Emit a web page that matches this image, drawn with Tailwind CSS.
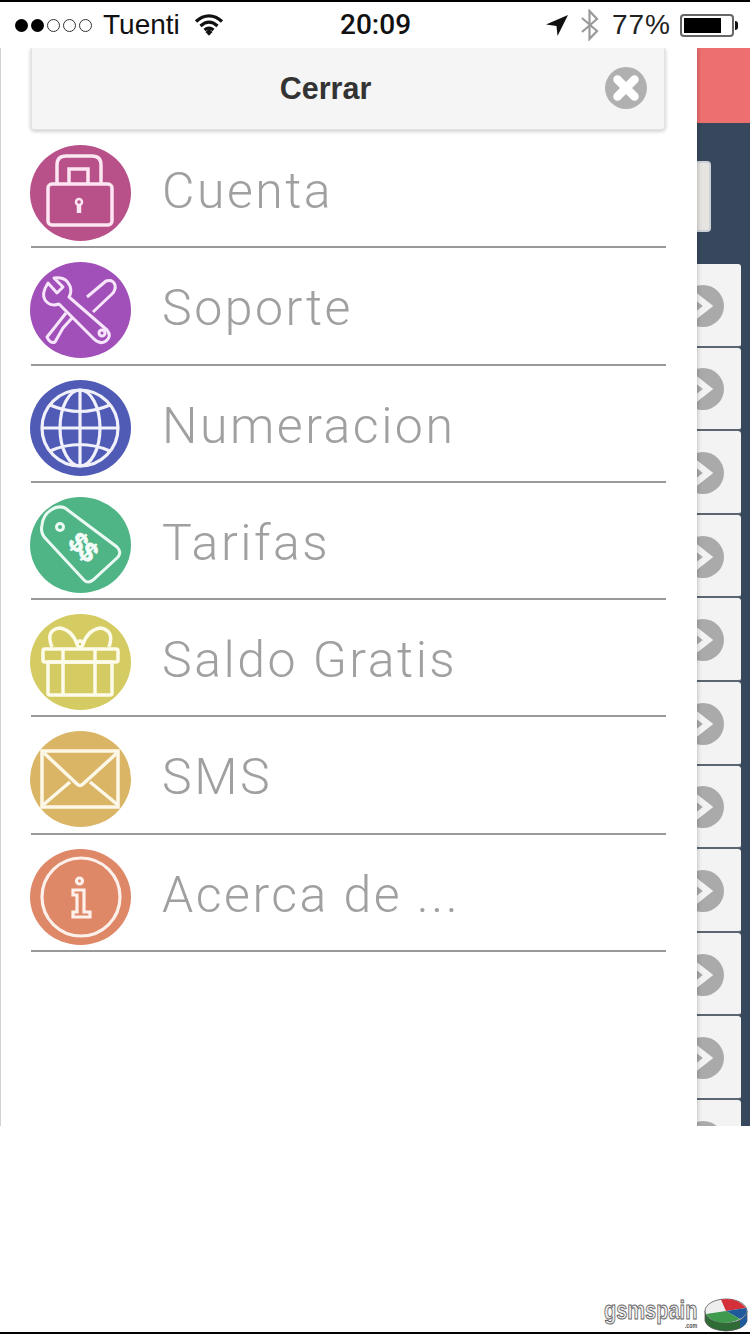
<!DOCTYPE html>
<html lang="es">
<head>
  <meta charset="UTF-8" />
  <meta name="viewport" content="width=device-width, initial-scale=1" />
  <title>Menu</title>
  <script src="https://cdn.jsdelivr.net/npm/@tailwindcss/browser@4"></script>
</head>
<body class="bg-white">
<div class="w-[750px] h-[1334px] overflow-hidden flex flex-col bg-white font-['Liberation_Sans',sans-serif]">

  <!-- status bar -->
  <header class="h-[48px] shrink-0 border-t-2 border-black flex items-center text-[28px] text-[#111] relative">
    <div class="flex items-center gap-[3px] ml-[15px] w-[83px]">
      <span class="w-[13px] h-[13px] rounded-full bg-black"></span>
      <span class="w-[13px] h-[13px] rounded-full bg-black"></span>
      <span class="w-[13px] h-[13px] rounded-full border border-[#333]"></span>
      <span class="w-[13px] h-[13px] rounded-full border border-[#333]"></span>
      <span class="w-[13px] h-[13px] rounded-full border border-[#333]"></span>
    </div>
    <span class="ml-[5px] leading-none">Tuenti</span>
    <svg class="ml-[14px]" width="30" height="24" viewBox="0 0 30 24">
      <path d="M2 8.500C10 1 20 1 28 8.500M6.500 13C12 8 18 8 23.500 13M10.500 17C13.500 14.500 16.500 14.500 19.500 17" fill="none" stroke="#111" stroke-width="3.200"/>
      <path d="M11.500 19L15 15.800 18.500 19 15 22.800Z" fill="#111"/>
    </svg>
    <span class="absolute left-[340px] top-[9px] font-['Roboto',sans-serif] font-medium leading-none">20:09</span>
    <div class="ml-auto flex items-center">
      <svg class="-ml-[2px]" width="24" height="24" viewBox="0 0 24 24"><path d="M23 2L1 11.500 11.500 13 12.500 23Z" fill="#111"/></svg>
      <svg class="ml-[10px]" width="22" height="32" viewBox="0 0 22 32"><path d="M3 9L18 22 10.500 30V2L18 10 3 23" fill="none" stroke="#9a9a9a" stroke-width="2.200"/></svg>
      <span class="ml-[11px] leading-none text-[#222] tracking-[1px]">77%</span>
      <div class="ml-[9px] w-[54px] h-[23px] rounded-[4px] border-2 border-[#666] p-[2px]">
        <div class="w-[37px] h-full bg-black"></div>
      </div>
      <span class="ml-[1px] mr-[12px] w-[3px] h-[9px] rounded-r-full bg-[#111]"></span>
    </div>
  </header>

  <main class="relative h-[1078px] shrink-0 overflow-hidden bg-[#37485c]">
    <!-- page underneath the drawer -->
    <div class="h-[75px] bg-[#ee6f70]"></div>
    <div class="mt-[38px] h-[71px] w-[711px] rounded-[4px] border-2 border-[#cdd2d8] bg-[#e5e4e1]"></div>
    <div id="rows" class="mt-[32px] w-[741px]"></div>

    <!-- drawer -->
    <aside class="absolute top-0 left-0 bottom-0 w-[697px] bg-white border-l border-[#cfd2d6] shadow-[1px_0_4px_rgba(0,0,0,0.2)]">
      <div class="ml-[30px] w-[634px] h-[82px] flex items-center bg-[#f5f5f5] rounded-b-[3px] border-x border-b border-[#e3e3e3] shadow-[0_1px_4px_rgba(0,0,0,0.25)] relative">
        <span class="w-full text-center pr-[45px] text-[30.5px] font-bold text-[#333]">Cerrar</span>
        <svg class="absolute right-[17px] top-[19px]" width="42" height="42" viewBox="0 0 42 42">
          <circle cx="21" cy="21" r="21" fill="#b0b0b0"/>
          <path d="M12.500 12.500L29.500 29.500M29.500 12.500L12.500 29.500" stroke="#fff" stroke-width="8.500" stroke-linecap="round"/>
        </svg>
      </div>

      <ul class="ml-[30px] pt-[1px] w-[635px] font-['Roboto',sans-serif] font-light text-[50px] tracking-[2.5px] text-[#a0a0a0]">
        <li class="h-[117.3px] flex items-start pt-[14px] border-b-2 border-[#999]">
          <svg class="shrink-0 -ml-[1px]" width="101" height="96" viewBox="0 0 101 96" fill="none" stroke="#fbe6f2" stroke-width="3.500">
            <ellipse cx="50.500" cy="48" rx="50.500" ry="48" fill="#b8508a" stroke="none"/>
            <rect x="18" y="39" width="64" height="41" rx="4"/>
            <path d="M27 39V20Q27 11 36 11H62Q71 11 71 20V39M39 39V24H58V39"/>
            <circle cx="49" cy="57" r="3" stroke-width="2.500"/>
            <path d="M49 60V68" stroke-width="4.500"/>
          </svg>
          <span class="ml-[31px] mt-[9px]">Cuenta</span>
        </li>
        <li class="h-[117.3px] flex items-start pt-[14px] border-b-2 border-[#999]">
          <svg class="shrink-0 -ml-[1px]" width="101" height="96" viewBox="0 0 101 96" fill="none" stroke="#f7e6fb" stroke-width="3" stroke-linejoin="round">
            <ellipse cx="50.500" cy="48" rx="50.500" ry="48" fill="#a050b8" stroke="none"/>
            <path d="M18 21L27 31 33 25 24 16Q36 14 40 24 42 30 39 35L77 68Q82 74 76 79 70 83 64 77L29 42Q20 45 15 38 11 32 18 21Z"/>
            <circle cx="72" cy="71" r="3"/>
            <path d="M57 35L76 19Q83 17 85 23 86 28 82 32L63 50M42 56L33 66 25 80Q20 82 17 75L25 65 36 51"/>
          </svg>
          <span class="ml-[31px] mt-[9px]">Soporte</span>
        </li>
        <li class="h-[117.3px] flex items-start pt-[14px] border-b-2 border-[#999]">
          <svg class="shrink-0 -ml-[1px]" width="101" height="96" viewBox="0 0 101 96" fill="none" stroke="#f0f1fb" stroke-width="3.200">
            <ellipse cx="50.500" cy="48" rx="50.500" ry="48" fill="#4f5bb5" stroke="none"/>
            <circle cx="50" cy="48" r="38"/>
            <ellipse cx="50" cy="48" rx="20" ry="38"/>
            <path d="M50 10V86M12 48H88M20 25Q50 38 80 25M20 71Q50 58 80 71"/>
          </svg>
          <span class="ml-[31px] mt-[9px]">Numeracion</span>
        </li>
        <li class="h-[117.3px] flex items-start pt-[14px] border-b-2 border-[#999]">
          <svg class="shrink-0 -ml-[1px]" width="101" height="96" viewBox="0 0 101 96" fill="none" stroke="#eafaf3" stroke-width="3">
            <ellipse cx="50.500" cy="48" rx="50.500" ry="48" fill="#4fb586" stroke="none"/>
            <path d="M35 11L87 50Q92 55 88 60L63 83Q58 87 54 83L16 42Q10 36 12 28 13 18 21 13 28 8 35 11Z"/>
            <circle cx="30" cy="30" r="3.500"/>
            <text x="53" y="59" transform="rotate(45 53 50)" text-anchor="middle" font-family="Liberation Sans" font-weight="700" font-size="27" letter-spacing="-1" fill="#f4fdf9" stroke="#f4fdf9" stroke-width="0.800">$$</text>
          </svg>
          <span class="ml-[31px] mt-[9px]">Tarifas</span>
        </li>
        <li class="h-[117.3px] flex items-start pt-[14px] border-b-2 border-[#999]">
          <svg class="shrink-0 -ml-[1px]" width="101" height="96" viewBox="0 0 101 96" fill="none" stroke="#fdfbea" stroke-width="3.500">
            <ellipse cx="50.500" cy="48" rx="50.500" ry="48" fill="#d5cb63" stroke="none"/>
            <rect x="13" y="35" width="75" height="13" rx="2"/>
            <rect x="18" y="48" width="64" height="33" rx="2"/>
            <path d="M33 35V81M65 35V81M22 33Q15 16 30 14 42 16 47 30M53 30Q58 16 70 14 85 16 79 33"/>
            <circle cx="50" cy="30" r="3"/>
          </svg>
          <span class="ml-[31px] mt-[9px]">Saldo Gratis</span>
        </li>
        <li class="h-[117.3px] flex items-start pt-[14px] border-b-2 border-[#999]">
          <svg class="shrink-0 -ml-[1px]" width="101" height="96" viewBox="0 0 101 96" fill="none" stroke="#fdf7e8" stroke-width="3.500">
            <ellipse cx="50.500" cy="48" rx="50.500" ry="48" fill="#d9b565" stroke="none"/>
            <rect x="12" y="20" width="76" height="56"/>
            <path d="M14 22L47 53Q50 56 53 53L87 22M13 74L40 51M88 74L60 51"/>
          </svg>
          <span class="ml-[31px] mt-[9px]">SMS</span>
        </li>
        <li class="h-[117.3px] flex items-start pt-[14px] border-b-2 border-[#999]">
          <svg class="shrink-0 -ml-[1px]" width="101" height="96" viewBox="0 0 101 96" fill="none" stroke="#fdf0ea" stroke-width="3.200">
            <ellipse cx="50.500" cy="48" rx="50.500" ry="48" fill="#de8868" stroke="none"/>
            <circle cx="51" cy="48" r="39"/>
            <circle cx="49.500" cy="32" r="3"/>
            <path d="M43 41H54V63H60V68H43V63H47V46H43Z"/>
          </svg>
          <span class="ml-[31px] mt-[9px]">Acerca de ...</span>
        </li>
      </ul>
    </aside>
  </main>

  <!-- watermark -->
  <footer class="flex-1 flex items-end justify-end border-b-2 border-black pr-[2px]">
    <div class="relative mb-[9px] mr-[7px] origin-right scale-x-[0.77] text-[26px] leading-none font-bold tracking-normal text-[#eee] [-webkit-text-stroke:1px_#666]">gsmspain<span class="absolute right-0 -bottom-[6px] text-[7px] tracking-normal text-[#555] [-webkit-text-stroke:0]">.com</span></div>
    <svg width="44" height="34" viewBox="0 0 44 34">
      <path d="M1 13V23Q4 32 22 33 40 32 43 23V13Z" fill="#2f6b35" stroke="#555" stroke-width="0.800"/>
      <path d="M36 21L43 16V23Q42 27 36 30Z" fill="#1f5a9c"/>
      <ellipse cx="22" cy="13" rx="21" ry="12" fill="#eee" stroke="#555" stroke-width="0.800"/>
      <path d="M22 13L17 1.500Q33 -1 42 10Z" fill="#d3303a"/>
      <path d="M22 13L42 10Q45 16 36 21Z" fill="#1f5a9c"/>
      <path d="M22 13L36 21Q28 25 18 25 6 23 2 16Z" fill="#3f9a4e"/>
    </svg>
  </footer>
</div>

<script>
  // filas de la lista que queda debajo del menu
  const rows = document.getElementById('rows');
  for (let i = 0; i < 11; i++) {
    const row = document.createElement('div');
    row.className = 'h-[83.6px] flex items-center justify-end pt-[2px] pr-[17px] bg-[#f3f3f3] border-b-2 border-[#5b6671] rounded-[3px]';
    row.innerHTML = '<svg width="42" height="42" viewBox="0 0 42 42"><circle cx="21" cy="21" r="21" fill="#aaa"/><path d="M12 10L26 21 12 32" fill="none" stroke="#f3f3f3" stroke-width="6.500"/></svg>';
    rows.appendChild(row);
  }
</script>
</body>
</html>
